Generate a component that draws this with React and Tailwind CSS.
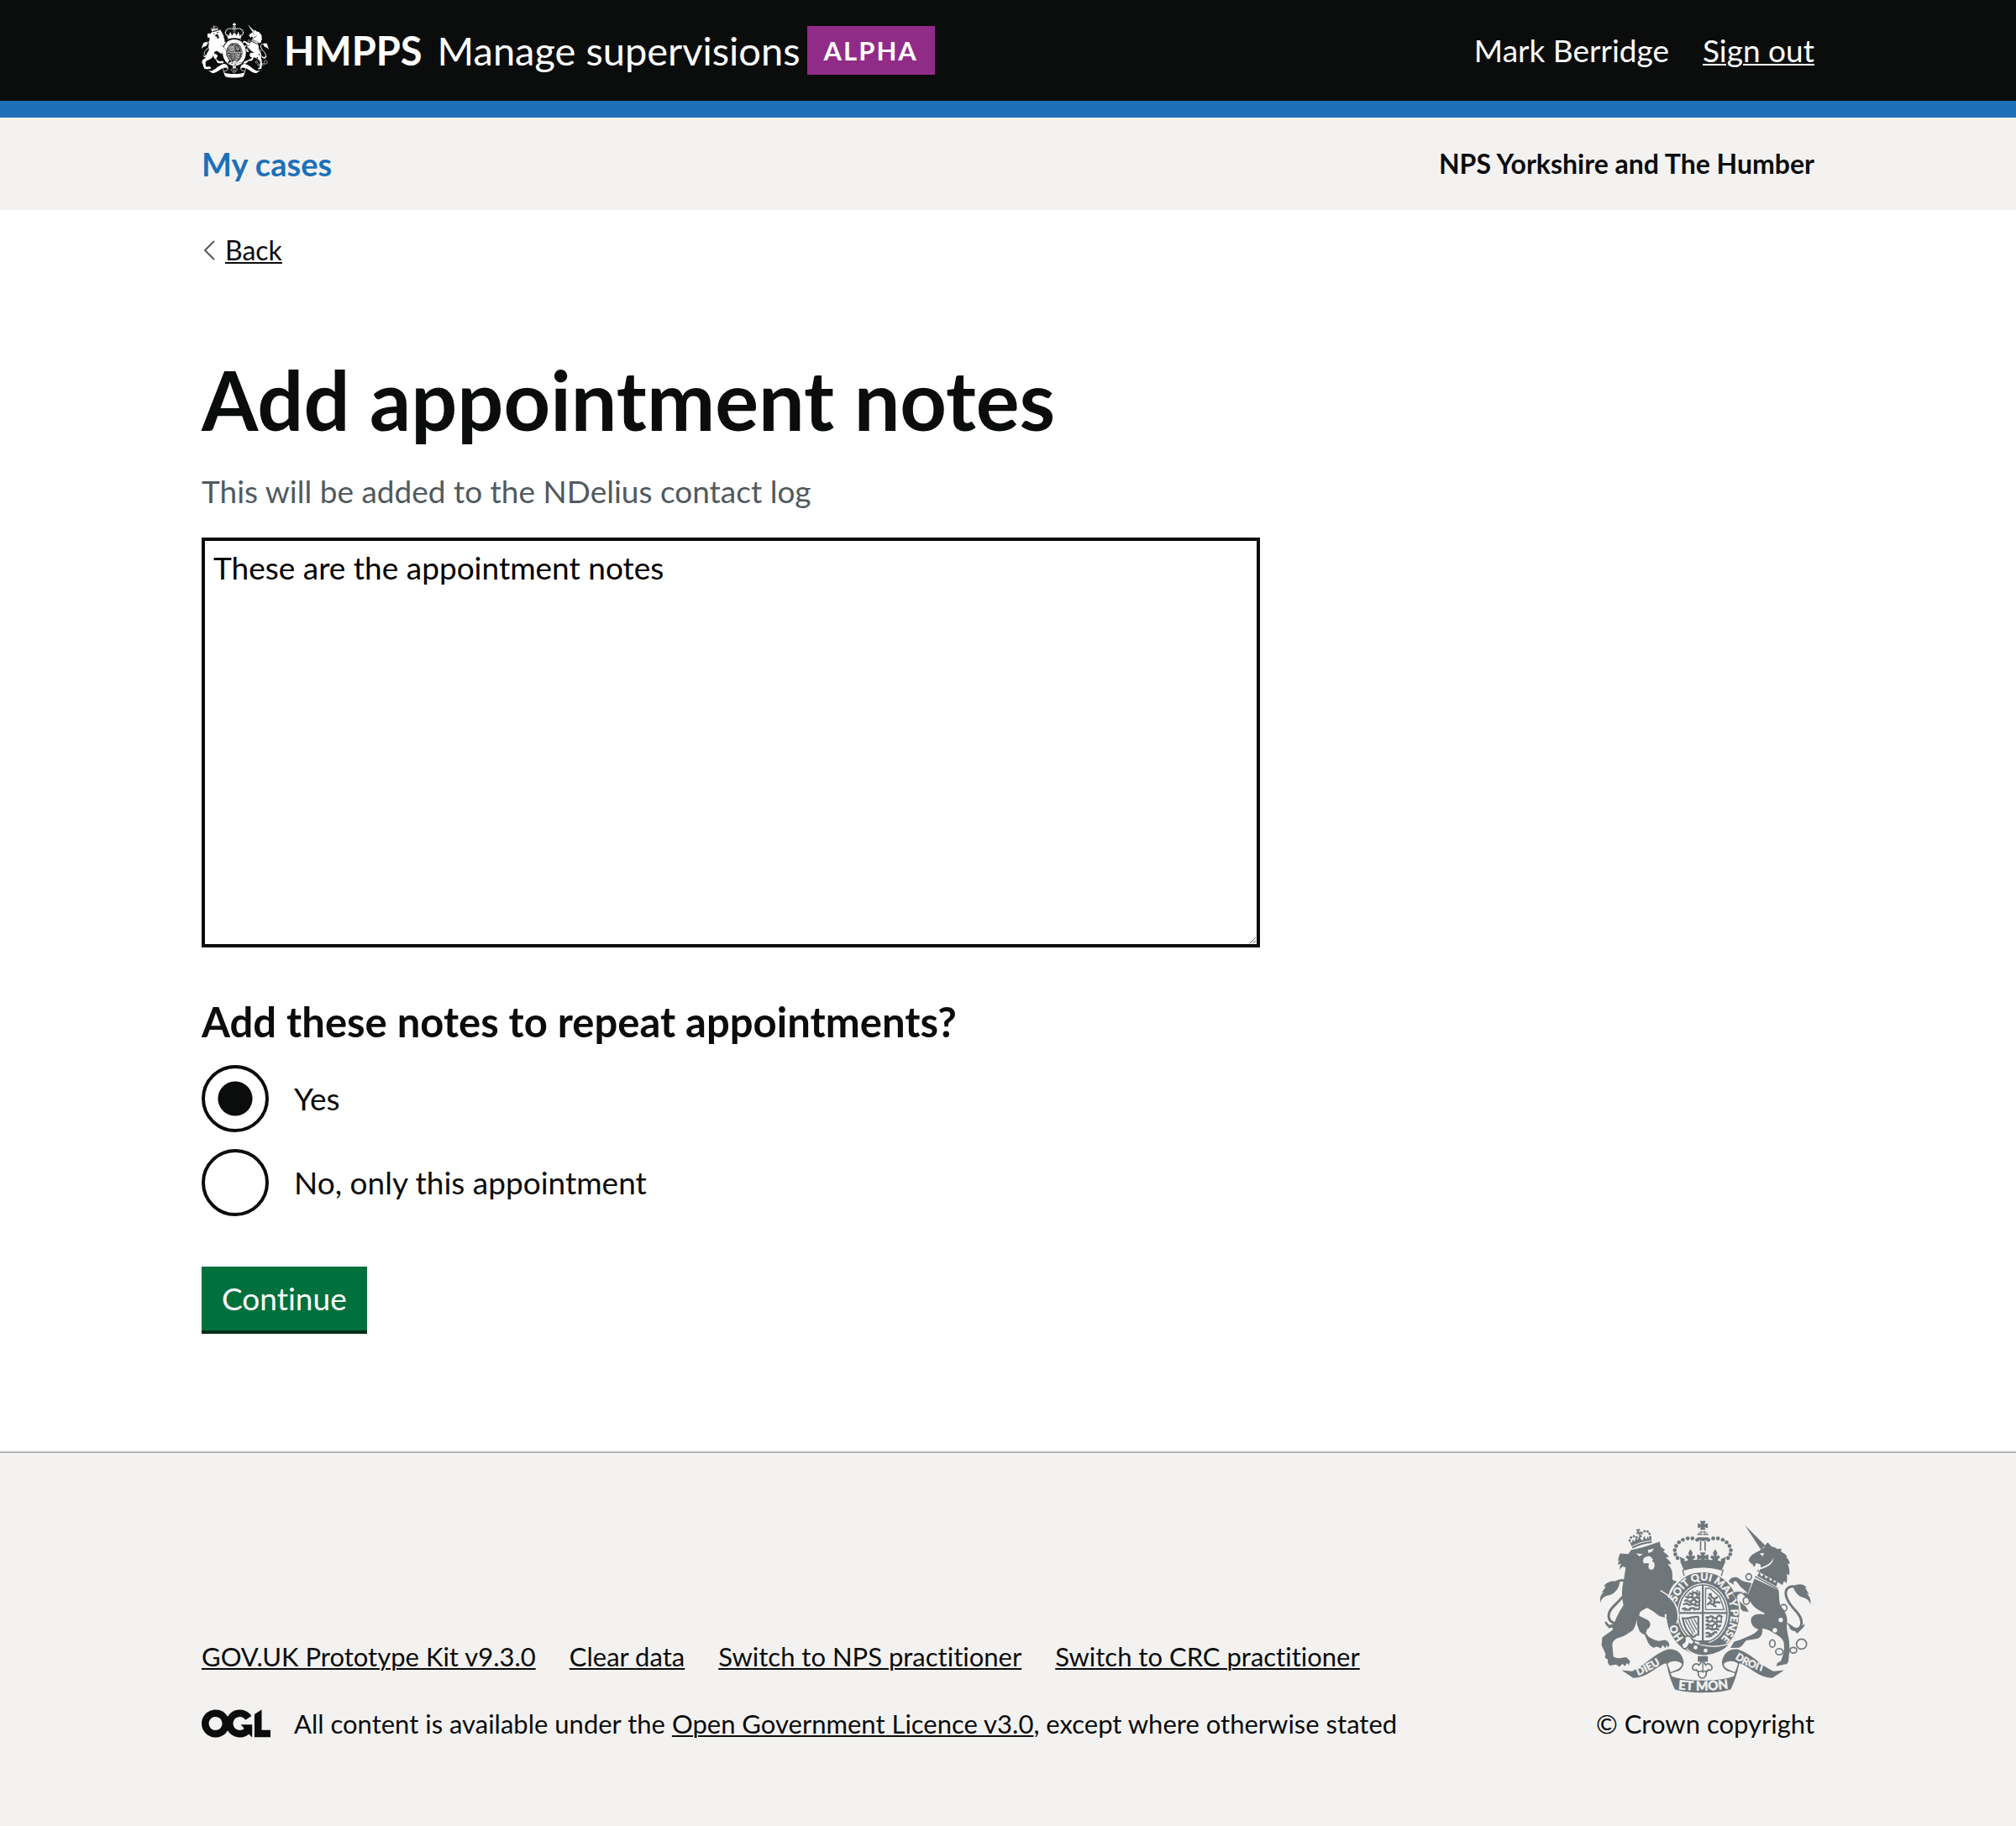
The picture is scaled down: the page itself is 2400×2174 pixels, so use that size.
import React from "react";

const CROWN_DOTS = [[418,157],[401,152],[384,152],[367,157],[353,166],[343,179],[338,194],[340,209],[348,222]];
const LION_CROWN_DOTS = [[177,159],[182,149],[192,144],[202,148],[216,144],[220,133],[230,126],[241,127],[248,135],[250,147]];

function Crest({ ground, motto = false, className }) {
  return (
    <svg viewBox="72 88 752 616" className={className} fill="currentColor" aria-hidden="true">
      {/* lion */}
      <path d="M172 208l10-14q40-8 78-22l24-8 4 18 15 10-6 8q14 8 21 18l-12 2q14 10 20 24l-13 0q14 14 16 30l1 26 16 6c-18 14-27 30-28 46 18 14 26 30 26 48l-20 40-40-10-24-18-20-12c-10 4-20 10-27 16l-2 12 20 10q18 6 20 20-2 14-12 18l-4 14q8 14 22 20 12 6 24 8l22-4q14 4 16 18l-4 10-6-10-4 12-10-12-6 12-14-6-14 4q-14-8-18-18l-12-28q-18-8-20-16l-8-22v-18c-4 18-8 34-18 42l-28 18-28 10q-12 8-14 20l4 44q14 8 30 4l16-2 14 14-6 14-6-8-6 12-10-8-10 10-12-8-22 4q-10-8-8-22l-10-6 2-14-14-30 2-28 12-10 24-16c6-30 20-60 40-90-8-32-6-62 2-94l6-40-10-4q-8 4-12 12 0-12 6-22l-12 4q2-12 8-18l-8 6q2-16 8-28z" />
      <g>
        {LION_CROWN_DOTS.map(([x, y]) => <circle key={x} cx={x} cy={y} r="4.5" />)}
        <path d="M200 122l4-4 4 3 4-5 3 9-5-1 1 6 7-3 1 6-6 0 4 7-8 1-1-7-6 3-2-5 5-3z" />
      </g>
      <path d="M176 162l12 26q34-18 68-20l-2-22-8 8-4-10-6 12-8-14-4 18-8-6-4-12-6 14-8-4-4 12-6-8-4 12z" />
      <path d="M186 180q32-16 68-20" stroke={ground} strokeWidth="3" fill="none" />
      <g fill={ground}>
        <path d="M200 206l24 2-12 8zM242 194l22-6-8 12-12 4z" />
        <path d="M228 222q10-8 22-6l10 10-2 8q10 4 8 16-2 12-10 14-12 0-12-12l2-10-8-2-10 2-4-10z" />
      </g>
      <g fill="none" stroke="currentColor" strokeWidth="9" strokeLinecap="round">
        <path d="M118 318c20-22 50-24 52 6 1 22-26 46-50 70-22 22-24 46-4 58 14 6 30 0 44-6" />
        <path d="M92 452c10 18 28 22 56 0" strokeWidth="7" />
      </g>
      <path d="M72 382c-2-16 0-28 14-40l-10 4c8-10 12-14 16-24l-8 2c14-22 38-22 58-16-4 26-22 46-46 48-12 4-20 12-24 26zM88 455c12 8 22 6 34 0l10 8-28 10z" />

      {/* unicorn */}
      <path d="M588 105l74 74-18 12z" />
      <path d="M600 234q4-14 12-22 14-10 28-16 6-8 18-12 4-12 12-18 6 8 14 16 14 2 20 8 10 0 14-2-2 8 0 12 14 6 22 18l-6 0q14 12 14 26l-8-2q10 20 6 42l-8-6q2 22-2 34l-8-8-6 14-82-48q6-12 4-24-8-6-16-6-2 10-8 14l-6-12q-6 2-10-10z" />
      <path d="M640 206l16-2-4 12zM690 220c0 22-18 34-46 42l-8-4c28-6 48-18 54-38z" fill={ground} />
      <path d="M622 296L708 336C712 360 708 380 718 396C736 416 742 440 738 462C736 480 744 500 746 520L748 556C742 574 748 590 738 600L700 608L704 596L716 590C724 570 732 548 726 520C716 500 700 496 684 486C672 478 660 474 650 474C652 490 648 504 632 510L594 516C584 524 580 538 566 542L536 543L550 520L570 514L598 502C614 496 630 488 636 476C618 472 608 456 610 442C612 424 634 420 656 424C664 420 648 414 632 404C618 396 612 384 604 372L580 352C570 346 560 352 562 366C568 380 582 386 592 396L602 414L582 412L564 396C552 382 546 366 544 352C556 340 572 340 584 344L600 350C608 330 616 312 622 296Z" />
      <path d="M632 266l84 46-12 20-80-44z" fill={ground} />
      <path d="M632 266l88 48M624 288l82 44" stroke="currentColor" strokeWidth="4" />
      <path d="M632 286l8-14 6 16 12-8 4 16 12-8 4 16 12-8 2 14 14-6-6 20z" />
      <g fill="none" stroke="currentColor" strokeWidth="5">
        <ellipse cx="602" cy="289" rx="10" ry="11" /><ellipse cx="593" cy="374" rx="11" ry="13" />
        <circle cx="726" cy="400" r="12" /><ellipse cx="686" cy="527" rx="10" ry="13" /><ellipse cx="711" cy="556" rx="13" ry="11" /><ellipse cx="761" cy="551" rx="12" ry="10" /><circle cx="790" cy="529" r="18" />
      </g>
      <circle cx="716" cy="443" r="8" fill={ground} /><circle cx="695" cy="480" r="8" fill={ground} />
      <path d="M778 330c-22-14-46-4-44 20 2 24 22 46 42 68 16 20 20 44 4 56-8 6-18 6-28-2" fill="none" stroke="currentColor" strokeWidth="9" strokeLinecap="round" />
      <path d="M822 388c2-18-2-28-14-40l10 4c-8-10-10-18-16-26l8 2c-14-16-32-14-50-6 6 24 20 38 38 42 14 4 20 12 24 24zM740 452l22 16q12 6 22 2l18-14c0 8-6 16-12 20l-16 16-6-8c-14-4-24-16-28-32z" />

      {/* garter and shield */}
      <ellipse cx="438" cy="420" rx="136" ry="154" fill={ground} />
      <ellipse cx="438" cy="420" rx="130" ry="148" />
      <ellipse cx="438" cy="420" rx="92" ry="108" fill={ground} />
      <ellipse cx="438" cy="420" rx="86" ry="102" fill="none" stroke="currentColor" strokeWidth="5" />
      <path d="M438 318v204M352 418h172" stroke="currentColor" strokeWidth="7" />
      <g fill="none" stroke="currentColor" strokeWidth="7" strokeLinejoin="round">
        <path d="M390 346q6 8 14 2t12 2 12-4M376 358l8 6 12-4 8 6 12-4 12 6" />
        <path d="M372 376q8-6 14 0t14-2 14 2 14-4M368 388l12-4 10 6 12-4 12 6 14-2" />
        <path d="M364 406q8-8 14-2t14 0 14-2 20 2" />
        <path d="M448 432q8 6 14 0t14 2 14-2 18 2M448 444l12 6 12-4 12 6 12-4 10 4" />
        <path d="M448 462q8-6 14 0t14-2 14 2 12-2M448 474l12-2 12 6 12-4 12 4" />
        <path d="M448 492q8-6 14 0t14-2 12 0M448 502l14 0 10-4" />
        <g strokeWidth="5">
          <path d="M386 350v14M402 338v28M418 336v28M380 380v8M396 372v18M412 372v18M426 340v66M374 400v12M392 398v12M408 398v12" />
          <path d="M456 430v16M472 432v16M488 432v18M504 432v16M456 460v14M472 460v18M488 458v18M460 488v16M476 486v12" />
        </g>
        <path d="M448 330h16l34 30 16 46h-66z" strokeWidth="4" />
        <path d="M500 382q-14-6-22 2t-14-4l-10 10M470 378q-6-14-14-16M462 348l8 14 10 6 12-8M480 370l-4 20 10 6M458 354l12-4" />
        <path d="M366 436c14 8 38-8 56-4v64c-10-4-12 8-18 8-18-14-34-40-38-68z" />
        <path d="M376 444l28 50M386 442l24 46M396 440l20 38M406 438l12 22" strokeWidth="4" />
      </g>
      {motto && (
        <>
          <defs>
            <path id="garter" d="M370 508A100 118 0 0 1 338 420A100 118 0 0 1 538 420A100 118 0 0 1 484 525" />
            <path id="banner-left" d="M207 642Q266 618 318 580" />
            <path id="banner-mid" d="M350 690Q438 700 526 688" />
            <path id="banner-right" d="M552 581Q610 618 682 636" />
          </defs>
          <g fill={ground} stroke={ground} strokeWidth="1" fontSize="37" className="font-['Lato'] font-black">
            <text><textPath href="#garter">HO</textPath></text>
            <text><textPath href="#garter" startOffset="136">SOIT QUI MAL Y PENSE</textPath></text>
          </g>
        </>
      )}

      {/* strap and buckle */}
      <path d="M384 506C420 536 470 546 534 528C520 550 480 570 438 570C410 570 388 556 374 540Z" stroke={ground} strokeWidth="4" />
      <path d="M424 516h40l-10 14h-26z" />
      <circle cx="412" cy="541" r="7" fill={ground} /><circle cx="448" cy="552" r="7" fill={ground} />
      <path d="M374 504c12-8 24-2 26 8l8 8c-4 10-12 12-18 8-10 26-30 20-26 0 12-4 12-12 10-24z" fill={ground} stroke="currentColor" strokeWidth="5" />

      {/* raised forelegs over the garter */}
      <path d="M287 338C312 352 338 374 346 402C354 424 352 440 345 456" fill="none" stroke={ground} strokeWidth="5" />
      <path d="M286 341C312 356 334 376 343 404C350 424 347 442 342 454L332 446L322 446L318 436L307 438L310 424L298 420L304 410L294 402L262 366Z" />
      <path d="M530 306C536 290 556 286 568 296C580 308 596 308 612 312L598 350C588 334 574 330 566 316L556 304L546 308L550 318Z" />
      <path d="M543 346q18-10 42 0l-20 6q-8 8-2 20-8-2-18-22z" stroke={ground} strokeWidth="2" />

      {/* crown */}
      <path d="M366 262h144l4 26-18-6q-58-18-116 0l-18 6z" fill={ground} />
      <path d="M428 90h20l-4 12 12-4v18l-12-4 4 10h-20l4-10-12 4V98l12 4zM418 140c2-18 38-18 40 0zM418 148h40c-6 18-34 18-40 0z" />
      <path d="M438 122v18M418 133h40" stroke={ground} strokeWidth="3" />
      <path d="M430 162v34M446 162v34" stroke="currentColor" strokeWidth="5" />
      {CROWN_DOTS.map(([x, y]) => (
        <React.Fragment key={x}>
          <circle cx={x} cy={y} r="7" />
          <circle cx={876 - x} cy={y} r="7" />
        </React.Fragment>
      ))}
      <path d="M358 236Q438 218 518 236L506 264Q438 248 370 264Z" />
      <path d="M428 202h20l-5 12 15-5v20l-15-5 5 14h-20l5-14-15 5v-20l15 5z" />
      <path d="M394 190l8 14-4 12 8-4 6 8-8 6 0 14h-20l0-14-8-6 6-8 8 4-4-12zM482 190l8 14-4 12 8-4 6 8-8 6 0 14h-20l0-14-8-6 6-8 8 4-4-12zM356 218l18 8-4 16h-10zM520 218l-18 8 4 16h10z" />
      <path d="M366 266q72-24 144 0l-6 20M366 266l6 20" fill="none" stroke="currentColor" strokeWidth="4" />

      {/* pendant and scroll */}
      <path d="M420 572h36v20h-36z" />
      <path d="M438 586l10 18c10-10 26 0 22 14-6 8-10 4-12 2l-8 10 0 10-8 10h-12l-8-10v-10l-8-10c-2 2-6 6-12-2-4-14 12-24 22-14z" fill={ground} stroke="currentColor" strokeWidth="5" />
      <path d="M438 592v40M420 626h36" stroke="currentColor" strokeWidth="4" />
      <path d="M148 622l38 4c46-22 84-66 126-78 36-4 56 20 58 48-4 28-24 32-44 34l-10-24c-6-10-10-10-22-4-34 18-60 48-104 48z" />
      <path d="M728 622l-38 4c-46-22-84-66-126-78-36-4-56 20-58 48 4 28 24 32 44 34l10-24c6-10 10-10 22-4 34 18 60 48 104 48z" />
      <path d="M310 600c10-16 44-16 56 0-2 20-28 24-44 32zM566 600c-10-16-44-16-56 0 2 20 28 24 44 32z" fill={ground} stroke="currentColor" strokeWidth="4" />
      <path d="M310 602c4 32 18 66 28 88 44 16 156 16 200 0 10-22 24-56 28-88l-18 42c-50 20-170 20-220 0z" />
      {motto && (
        <g fill={ground} stroke={ground} strokeWidth="1" className="font-['Lato'] font-black">
          <text fontSize="38"><textPath href="#banner-left">DIEU</textPath></text>
          <text fontSize="46"><textPath href="#banner-mid">ET MON</textPath></text>
          <text fontSize="36"><textPath href="#banner-right">DROIT</textPath></text>
        </g>
      )}
    </svg>
  );
}

function OglLogo() {
  return (
    <svg viewBox="0 0 483.2 195.7" className="h-[34px] w-[82px] shrink-0" fill="currentColor" role="img" aria-label="Open Government Licence">
      <path d="M421.5 142.8V.1l-50.7 32.3v161.1h112.4v-50.7zm-122.3-9.6A47.12 47.12 0 0 1 221 97.8c0-26 21.1-47.1 47.1-47.1 16.7 0 31.4 8.7 39.7 21.8l42.7-27.2A97.63 97.63 0 0 0 268.1 0c-36.5 0-68.3 20.1-85.1 49.7A98 98 0 0 0 97.8 0C43.9 0 0 43.9 0 97.8s43.9 97.8 97.8 97.8c36.5 0 68.3-20.1 85.1-49.7a97.76 97.76 0 0 0 149.6 25.4l19.4 22.2h3v-87.8h-80l24.3 27.5zM97.8 145c-26 0-47.1-21.1-47.1-47.1s21.1-47.1 47.1-47.1 47.1 21.1 47.1 47.1S123.8 145 97.8 145" />
    </svg>
  );
}

const container = "mx-auto w-4/5 max-w-[1920px]";
const link = "underline decoration-2 underline-offset-2";

function Header() {
  return (
    <header className="border-b-20 border-[#1d70b8] bg-[#0b0c0c] text-white">
      <div className={`${container} flex h-[120px] items-center justify-between`}>
        <div className="flex items-center">
          <a href="#home" className="flex items-center gap-[18px] text-[47px]">
            <Crest ground="#0b0c0c" className="h-[68px] w-20" />
            <span className="font-bold">HMPPS</span>
            <span>Manage supervisions</span>
          </a>
          <strong className="ml-2 bg-[#912b88] px-5 text-[31px] leading-[58px] font-bold tracking-[2px]">ALPHA</strong>
        </div>
        <div className="flex items-center gap-10 text-[37px]">
          <span>Mark Berridge</span>
          <a href="#sign-out" className={link}>Sign out</a>
        </div>
      </div>
    </header>
  );
}

function Radio({ id, label, defaultChecked }) {
  return (
    <div className="flex items-center gap-[30px]">
      <input
        type="radio"
        name="repeat"
        id={id}
        defaultChecked={defaultChecked}
        className="size-20 shrink-0 appearance-none rounded-full border-4 border-[#0b0c0c] checked:bg-[radial-gradient(circle,#0b0c0c_20px,transparent_21px)]"
      />
      <label htmlFor={id} className="text-[37px] leading-[50px]">{label}</label>
    </div>
  );
}

const footerLinks = ["GOV.UK Prototype Kit v9.3.0", "Clear data", "Switch to NPS practitioner", "Switch to CRC practitioner"];

export default function App() {
  return (
    <div className="flex min-h-screen flex-col bg-[#f3f2f1] font-['Lato',sans-serif] text-[#0b0c0c] [font-variant-ligatures:no-common-ligatures]">
      <Header />
      <nav>
        <div className={`${container} flex h-[110px] items-center justify-between`}>
          <a href="#cases" className="text-[38px] font-bold text-[#1d70b8]">My cases</a>
          <span className="text-[32px] font-bold">NPS Yorkshire and The Humber</span>
        </div>
      </nav>
      <div className="bg-white">
        <div className={`${container} pt-7 pb-[140px]`}>
          <a href="#back" className="inline-flex items-center gap-3 text-[32px] leading-10">
            <svg viewBox="0 0 16 24" className="h-6 w-4 text-[#505a5f]" fill="none" stroke="currentColor" strokeWidth="2" aria-hidden="true">
              <path d="M15 1L4 12l11 11" />
            </svg>
            <span className={link}>Back</span>
          </a>
          <main className="w-2/3 pt-[108px] pr-5">
            <form onSubmit={(e) => e.preventDefault()}>
              <h1 className="text-[97px] leading-[100px] font-bold">
                <label htmlFor="notes">Add appointment notes</label>
              </h1>
              <p id="notes-hint" className="mt-[34px] text-[37px] leading-[50px] text-[#505a5f]">This will be added to the NDelius contact log</p>
              <textarea
                id="notes"
                aria-describedby="notes-hint"
                defaultValue="These are the appointment notes"
                className="mt-[30px] block h-[488px] w-full resize-y border-4 border-[#0b0c0c] bg-white px-[10px] py-2 text-[37px] leading-[48px] text-black"
              />
              <fieldset className="mt-[58px]">
                <legend className="mb-[22px] text-[49px] leading-[60px] font-bold">Add these notes to repeat appointments?</legend>
                <div className="flex flex-col gap-5">
                  <Radio id="repeat-yes" label="Yes" defaultChecked />
                  <Radio id="repeat-no" label="No, only this appointment" />
                </div>
              </fieldset>
              <button type="submit" className="mt-[60px] block h-20 border-b-4 border-[#002d18] bg-[#00703c] px-6 text-[37px] leading-[76px] text-white">Continue</button>
            </form>
          </main>
        </div>
      </div>
      <footer className="grow border-t-2 border-[#b1b4b6] text-[31px] leading-10">
        <div className={`${container} flex items-end justify-between pt-20`}>
          <div>
            <ul className="mb-10 flex gap-10">
              {footerLinks.map((t) => (
                <li key={t}><a href="#footer" className={link}>{t}</a></li>
              ))}
            </ul>
            <div className="flex items-center gap-7">
              <OglLogo />
              <p>All content is available under the <a href="#licence" className={link}>Open Government Licence v3.0</a>, except where otherwise stated</p>
            </div>
          </div>
          <a href="#copyright" className="flex flex-col items-center gap-4">
            <Crest ground="#f3f2f1" motto className="h-[206px] w-[251px] text-[#6f777b]" />
            <span>© Crown copyright</span>
          </a>
        </div>
      </footer>
    </div>
  );
}
